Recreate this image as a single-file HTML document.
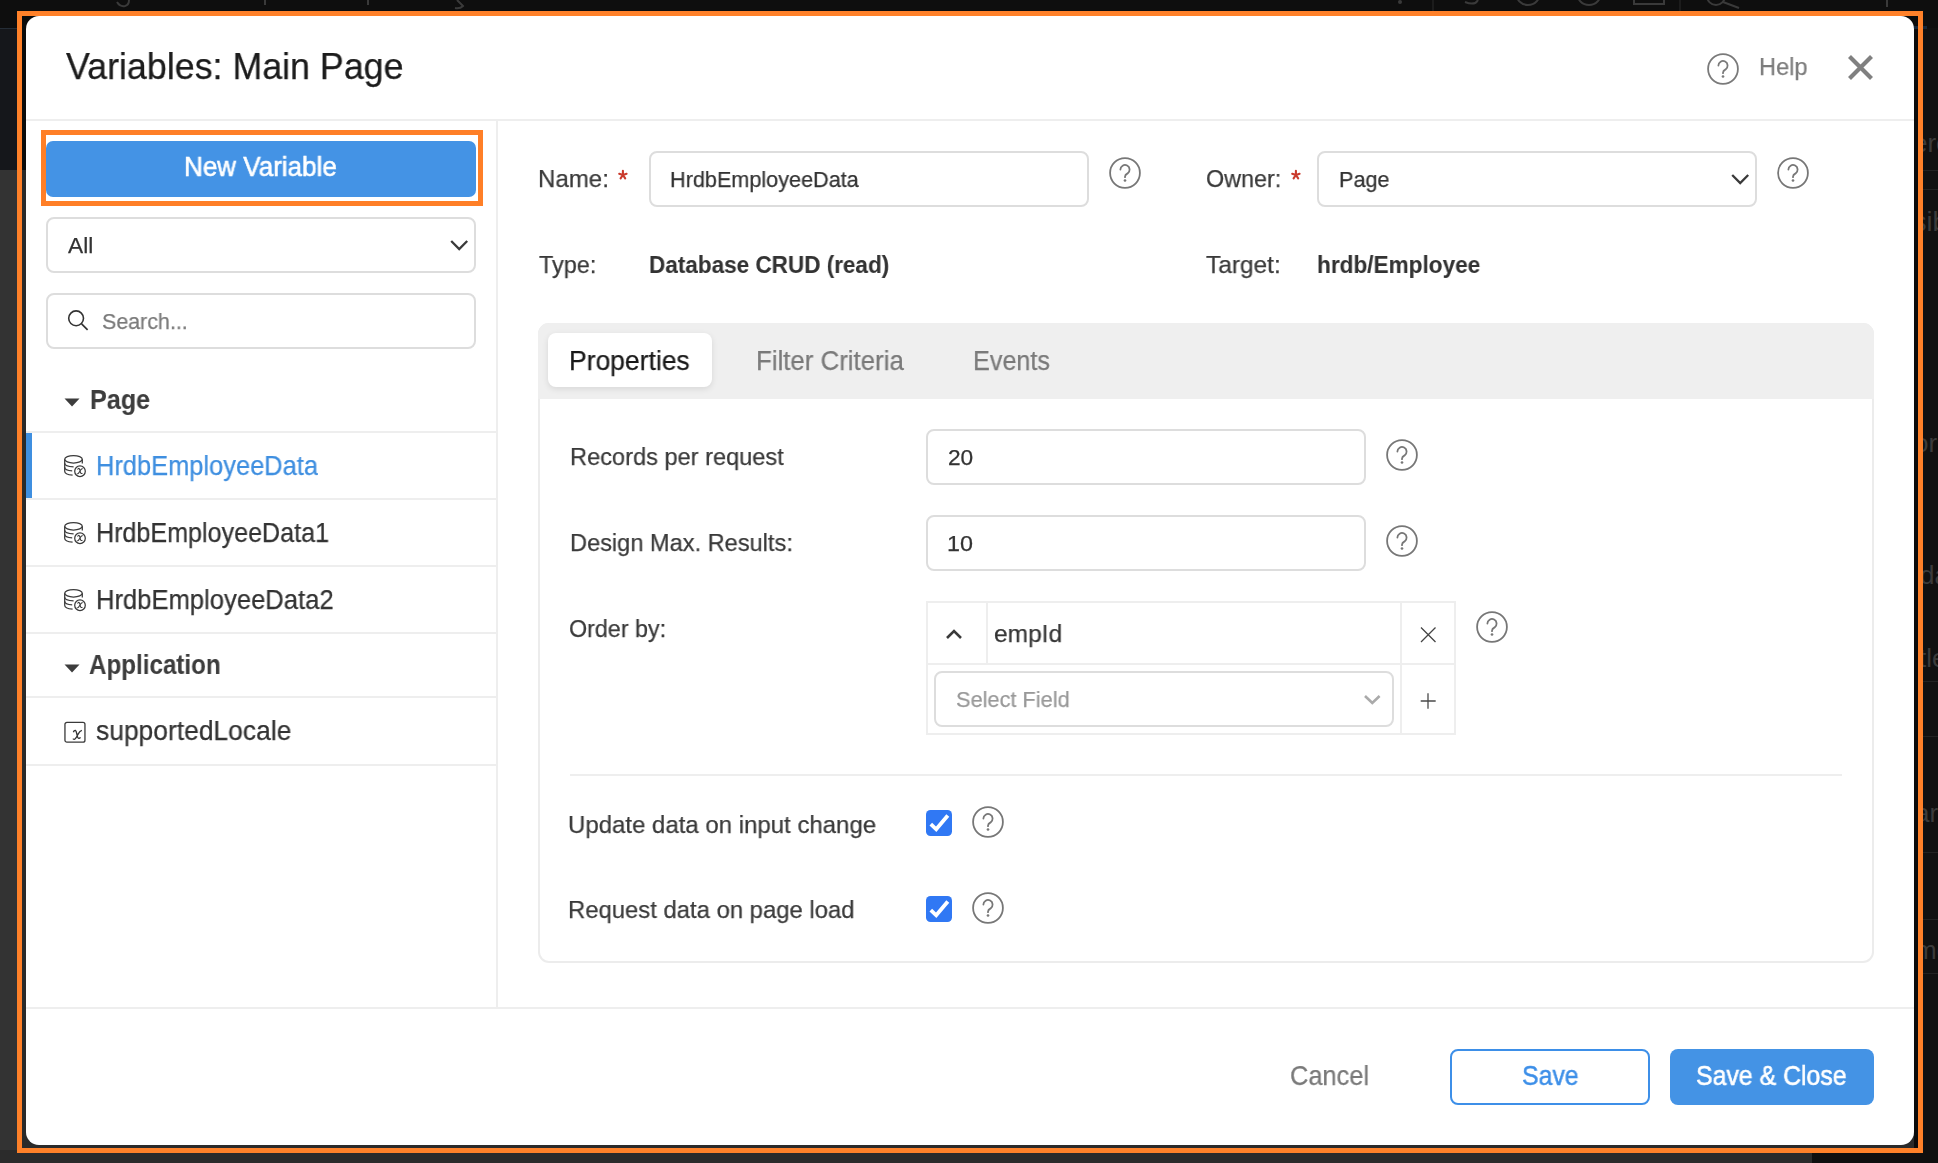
<!DOCTYPE html>
<html><head><meta charset="utf-8"><title>Variables: Main Page</title>
<style>
html,body{margin:0;padding:0;}
body{width:1938px;height:1163px;position:relative;overflow:hidden;font-family:"Liberation Sans", sans-serif;background:#333;}
.t{position:absolute;white-space:nowrap;line-height:1;font-family:"Liberation Sans", sans-serif;will-change:transform;}
svg{overflow:visible;}
</style></head><body>
<div style="position:absolute;left:0px;top:0px;width:1938px;height:1163px;background:#333;"></div>
<div style="position:absolute;left:0px;top:0px;width:1938px;height:170px;background:#131417;"></div>
<div style="position:absolute;left:1918px;top:0px;width:20px;height:1163px;background:#111;"></div>
<div style="position:absolute;left:0px;top:1150px;width:1938px;height:13px;background:#2b2b2b;"></div>
<div style="position:absolute;left:1812px;top:1150px;width:126px;height:13px;background:#0f0f0f;"></div>
<div style="position:absolute;left:0px;top:0px;width:1938px;height:28px;background:#0e0e0e;"></div>
<div style="position:absolute;left:0px;top:28px;width:17px;height:1px;background:#252d36;"></div>
<div style="position:absolute;left:0px;top:29px;width:17px;height:141px;background:#15171b;"></div>
<svg style="position:absolute;left:0;top:0" width="1938" height="11" viewBox="0 0 1938 11"><g fill="none" stroke="#3a3a3a" stroke-width="2"><path d="M117 2 Q120 7 125 6 Q129 5 129 0"/><path d="M265 0 V5"/><path d="M368 0 V5"/><path d="M457 0 L463 6 Q460 9 455 8"/><circle cx="1528" cy="-7" r="12"/><circle cx="1589" cy="-7" r="12"/><path d="M1634 -2 V4 H1664 V-2"/><circle cx="1716" cy="-4" r="9"/><path d="M1723 2 L1739 8"/><path d="M1465 2 Q1475 6 1478 0"/></g><path d="M1433 0 V11 M1680 0 V11" stroke="#2a2a2a" stroke-width="1"/><path d="M1887 0 V7" stroke="#3a3a3a" stroke-width="2"/><circle cx="1400" cy="2" r="2" fill="#3a3a3a"/></svg>
<div style="position:absolute;left:1923px;top:0;width:15px;height:1163px;overflow:hidden;"><div style="position:absolute;left:-30px;top:0;width:60px;height:1163px;font-family:'Liberation Sans',sans-serif;font-size:26px;color:#3b3b3b;"><div style="position:absolute;left:20px;top:128px;white-space:nowrap;">erc</div><div style="position:absolute;left:0;top:170px;width:60px;height:1px;background:#222;"></div><div style="position:absolute;left:0;top:189px;width:60px;height:1px;background:#222;"></div><div style="position:absolute;left:20px;top:207px;white-space:nowrap;font-size:27px;">sib</div><div style="position:absolute;left:21px;top:428px;white-space:nowrap;">or</div><div style="position:absolute;left:27px;top:560px;white-space:nowrap;">da</div><div style="position:absolute;left:26px;top:643px;white-space:nowrap;">tle</div><div style="position:absolute;left:0;top:681px;width:60px;height:1px;background:#222;"></div><div style="position:absolute;left:0;top:736px;width:60px;height:1px;background:#222;"></div><div style="position:absolute;left:22px;top:798px;white-space:nowrap;">ar</div><div style="position:absolute;left:0;top:852px;width:60px;height:1px;background:#222;"></div><div style="position:absolute;left:0;top:919px;width:60px;height:1px;background:#222;"></div><div style="position:absolute;left:22px;top:935px;white-space:nowrap;">me</div><div style="position:absolute;left:0;top:973px;width:60px;height:1px;background:#222;"></div></div></div>
<div style="position:absolute;left:17px;top:11px;width:1906px;height:159px;background:#0b0b0b;"></div>
<div style="position:absolute;left:17px;top:170px;width:1906px;height:983px;background:#2a2a2a;"></div>
<div style="position:absolute;left:1914px;top:11px;width:9px;height:1142px;background:#0b0b0b;"></div>
<div style="position:absolute;left:1914px;top:26px;width:13px;height:3px;background:#15263a;"></div>
<div style="position:absolute;left:17px;top:11px;width:1906px;height:1142px;box-sizing:border-box;border:5px solid #ff8129;"></div>
<div style="position:absolute;left:26px;top:16px;width:1888px;height:1129px;background:#fff;border-radius:13px;"></div>
<svg style="position:absolute;left:1703px;top:49px" width="40" height="40" viewBox="0 0 40 40"><circle cx="20" cy="20" r="14.90" fill="none" stroke="#7a7a7a" stroke-width="1.8"/><path d="M15.4 16.6 A4.6 4.6 0 1 1 22.6 20.4 C21.1 21.2 20 22 20 23.7 V24.2" fill="none" stroke="#7a7a7a" stroke-width="1.8" stroke-linecap="round"/><circle cx="20" cy="27.5" r="1.35" fill="#7a7a7a"/></svg>
<svg style="position:absolute;left:1846px;top:53px" width="29" height="29" viewBox="0 0 29 29"><path d="M3.5 3.5 L25.5 25.5 M25.5 3.5 L3.5 25.5" stroke="#808080" stroke-width="4.2" stroke-linecap="butt"/></svg>
<div style="position:absolute;left:26px;top:119px;width:1888px;height:2px;background:#eeeeee;"></div>
<div style="position:absolute;left:496px;top:121px;width:2px;height:886px;background:#eeeeee;"></div>
<div style="position:absolute;left:26px;top:1007px;width:1888px;height:2px;background:#eeeeee;"></div>
<div style="position:absolute;left:41px;top:130px;width:442px;height:76px;box-sizing:border-box;border:5px solid #ff7f27;"></div>
<div style="position:absolute;left:46px;top:141px;width:430px;height:56px;background:#4493e5;border-radius:7px;"></div>
<div style="position:absolute;left:46px;top:217px;width:430px;height:56px;box-sizing:border-box;border:2px solid #dddddd;border-radius:8px;"></div>
<svg style="position:absolute;left:448px;top:238px" width="22" height="14" viewBox="0 0 22 14"><path d="M3.2 3 L11.2 11 L19.2 3" fill="none" stroke="#3a3a3a" stroke-width="2.3"/></svg>
<div style="position:absolute;left:46px;top:293px;width:430px;height:56px;box-sizing:border-box;border:2px solid #dddddd;border-radius:8px;"></div>
<svg style="position:absolute;left:64px;top:306px" width="28" height="28" viewBox="0 0 28 28"><circle cx="12.1" cy="12.3" r="7.4" fill="none" stroke="#333" stroke-width="1.6"/><path d="M17.6 17.8 L23.6 23.8" stroke="#333" stroke-width="1.7"/></svg>
<svg style="position:absolute;left:64px;top:398px" width="16" height="9" viewBox="0 0 16 9"><path d="M0.5 0.5 L15.5 0.5 L8 8.5 Z" fill="#3d3d3d"/></svg>
<div style="position:absolute;left:26px;top:431px;width:470px;height:2px;background:#eeeeee;"></div>
<div style="position:absolute;left:26px;top:498px;width:470px;height:2px;background:#eeeeee;"></div>
<div style="position:absolute;left:26px;top:565px;width:470px;height:2px;background:#eeeeee;"></div>
<div style="position:absolute;left:26px;top:632px;width:470px;height:2px;background:#eeeeee;"></div>
<div style="position:absolute;left:26px;top:696px;width:470px;height:2px;background:#eeeeee;"></div>
<div style="position:absolute;left:26px;top:764px;width:470px;height:2px;background:#eeeeee;"></div>
<div style="position:absolute;left:26px;top:433px;width:6px;height:65px;background:#3f8fe0;"></div>
<svg style="position:absolute;left:63px;top:454px" width="24" height="24" viewBox="0 0 24 24"><g fill="none" stroke="#3a3a3a" stroke-width="1.25"><ellipse cx="10.5" cy="5.3" rx="8.8" ry="3.7"/><path d="M1.7 5.3 V17.2 C1.7 19.4 5 20.8 9.6 21.2"/><path d="M1.7 9.2 C1.7 11.3 5.4 12.6 10.6 12.8"/><path d="M1.7 13.2 C1.7 15.3 5 16.6 9.2 16.8"/><path d="M19.3 5.3 V9.6"/><circle cx="17" cy="17.2" r="5.3"/></g><path d="M14.6 15.6 C14.9 14.6 15.5 14.2 16.1 14.5 C16.9 15 17.1 17.5 17.6 18.9 C17.9 19.8 18.8 19.8 19.3 18.9 M19.7 14.5 C18.7 14.6 17.6 15.8 16.8 17.3 C16.2 18.5 15.6 19.6 14.8 19.8 C14.4 19.9 14.2 19.6 14.3 19.3" fill="none" stroke="#3a3a3a" stroke-width="1.05"/></svg>
<svg style="position:absolute;left:63px;top:521px" width="24" height="24" viewBox="0 0 24 24"><g fill="none" stroke="#3a3a3a" stroke-width="1.25"><ellipse cx="10.5" cy="5.3" rx="8.8" ry="3.7"/><path d="M1.7 5.3 V17.2 C1.7 19.4 5 20.8 9.6 21.2"/><path d="M1.7 9.2 C1.7 11.3 5.4 12.6 10.6 12.8"/><path d="M1.7 13.2 C1.7 15.3 5 16.6 9.2 16.8"/><path d="M19.3 5.3 V9.6"/><circle cx="17" cy="17.2" r="5.3"/></g><path d="M14.6 15.6 C14.9 14.6 15.5 14.2 16.1 14.5 C16.9 15 17.1 17.5 17.6 18.9 C17.9 19.8 18.8 19.8 19.3 18.9 M19.7 14.5 C18.7 14.6 17.6 15.8 16.8 17.3 C16.2 18.5 15.6 19.6 14.8 19.8 C14.4 19.9 14.2 19.6 14.3 19.3" fill="none" stroke="#3a3a3a" stroke-width="1.05"/></svg>
<svg style="position:absolute;left:63px;top:588px" width="24" height="24" viewBox="0 0 24 24"><g fill="none" stroke="#3a3a3a" stroke-width="1.25"><ellipse cx="10.5" cy="5.3" rx="8.8" ry="3.7"/><path d="M1.7 5.3 V17.2 C1.7 19.4 5 20.8 9.6 21.2"/><path d="M1.7 9.2 C1.7 11.3 5.4 12.6 10.6 12.8"/><path d="M1.7 13.2 C1.7 15.3 5 16.6 9.2 16.8"/><path d="M19.3 5.3 V9.6"/><circle cx="17" cy="17.2" r="5.3"/></g><path d="M14.6 15.6 C14.9 14.6 15.5 14.2 16.1 14.5 C16.9 15 17.1 17.5 17.6 18.9 C17.9 19.8 18.8 19.8 19.3 18.9 M19.7 14.5 C18.7 14.6 17.6 15.8 16.8 17.3 C16.2 18.5 15.6 19.6 14.8 19.8 C14.4 19.9 14.2 19.6 14.3 19.3" fill="none" stroke="#3a3a3a" stroke-width="1.05"/></svg>
<svg style="position:absolute;left:64px;top:664px" width="16" height="9" viewBox="0 0 16 9"><path d="M0.5 0.5 L15.5 0.5 L8 8.5 Z" fill="#3d3d3d"/></svg>
<svg style="position:absolute;left:63px;top:721px" width="24" height="24" viewBox="0 0 24 24"><rect x="1.95" y="1.35" width="20" height="19.8" rx="2" fill="none" stroke="#3a3a3a" stroke-width="1.3"/><path d="M10.4 11.3 C10.8 9.9 11.6 9.1 12.4 9.4 C13.5 9.9 13.8 13.5 14.5 15.9 C15 17.6 16.3 18 17.5 16.4 M18.9 9.4 C17.6 9.6 16.1 11.2 15.1 13.1 C14.2 14.9 13.1 17.6 11.8 18.2 C11 18.5 10.3 18.2 10.1 17.6" fill="none" stroke="#333" stroke-width="1.35"/></svg>
<svg style="position:absolute;left:612px;top:164px" width="22" height="22" viewBox="0 0 22 22"><path d="M10.9 11 L10.9 6.7 M10.9 11 L7.2 9.8 M10.9 11 L14.6 9.8 M10.9 11 L8.6 14.4 M10.9 11 L13.2 14.4" stroke="#ca3a2c" stroke-width="2.1" stroke-linecap="round"/></svg>
<div style="position:absolute;left:649px;top:151px;width:440px;height:56px;box-sizing:border-box;border:2px solid #dddddd;border-radius:8px;"></div>
<svg style="position:absolute;left:1105px;top:153px" width="40" height="40" viewBox="0 0 40 40"><circle cx="20" cy="20" r="14.90" fill="none" stroke="#777" stroke-width="1.8"/><path d="M15.4 16.6 A4.6 4.6 0 1 1 22.6 20.4 C21.1 21.2 20 22 20 23.7 V24.2" fill="none" stroke="#777" stroke-width="1.8" stroke-linecap="round"/><circle cx="20" cy="27.5" r="1.35" fill="#777"/></svg>
<svg style="position:absolute;left:1284.7px;top:164px" width="22" height="22" viewBox="0 0 22 22"><path d="M10.9 11 L10.9 6.7 M10.9 11 L7.2 9.8 M10.9 11 L14.6 9.8 M10.9 11 L8.6 14.4 M10.9 11 L13.2 14.4" stroke="#ca3a2c" stroke-width="2.1" stroke-linecap="round"/></svg>
<div style="position:absolute;left:1317px;top:151px;width:440px;height:56px;box-sizing:border-box;border:2px solid #dddddd;border-radius:8px;"></div>
<svg style="position:absolute;left:1729px;top:172px" width="22" height="14" viewBox="0 0 22 14"><path d="M3.2 3 L11.2 11 L19.2 3" fill="none" stroke="#3a3a3a" stroke-width="2.3"/></svg>
<svg style="position:absolute;left:1773px;top:153px" width="40" height="40" viewBox="0 0 40 40"><circle cx="20" cy="20" r="14.90" fill="none" stroke="#777" stroke-width="1.8"/><path d="M15.4 16.6 A4.6 4.6 0 1 1 22.6 20.4 C21.1 21.2 20 22 20 23.7 V24.2" fill="none" stroke="#777" stroke-width="1.8" stroke-linecap="round"/><circle cx="20" cy="27.5" r="1.35" fill="#777"/></svg>
<div style="position:absolute;left:538px;top:323px;width:1336px;height:640px;box-sizing:border-box;border:2px solid #ececec;border-radius:11px;background:#fff;overflow:hidden;"></div>
<div style="position:absolute;left:538px;top:323px;width:1336px;height:76px;background:#efefef;border-radius:11px 11px 0 0;"></div>
<div style="position:absolute;left:548px;top:333px;width:164px;height:54px;background:#fff;border-radius:8px;box-shadow:0 2px 6px rgba(0,0,0,0.10);"></div>
<div style="position:absolute;left:926px;top:429px;width:440px;height:56px;box-sizing:border-box;border:2px solid #dddddd;border-radius:8px;"></div>
<svg style="position:absolute;left:1382px;top:435px" width="40" height="40" viewBox="0 0 40 40"><circle cx="20" cy="20" r="14.90" fill="none" stroke="#777" stroke-width="1.8"/><path d="M15.4 16.6 A4.6 4.6 0 1 1 22.6 20.4 C21.1 21.2 20 22 20 23.7 V24.2" fill="none" stroke="#777" stroke-width="1.8" stroke-linecap="round"/><circle cx="20" cy="27.5" r="1.35" fill="#777"/></svg>
<div style="position:absolute;left:926px;top:515px;width:440px;height:56px;box-sizing:border-box;border:2px solid #dddddd;border-radius:8px;"></div>
<svg style="position:absolute;left:1382px;top:521px" width="40" height="40" viewBox="0 0 40 40"><circle cx="20" cy="20" r="14.90" fill="none" stroke="#777" stroke-width="1.8"/><path d="M15.4 16.6 A4.6 4.6 0 1 1 22.6 20.4 C21.1 21.2 20 22 20 23.7 V24.2" fill="none" stroke="#777" stroke-width="1.8" stroke-linecap="round"/><circle cx="20" cy="27.5" r="1.35" fill="#777"/></svg>
<div style="position:absolute;left:926px;top:601px;width:530px;height:134px;box-sizing:border-box;border:2px solid #eeeeee;"></div>
<div style="position:absolute;left:986px;top:601px;width:2px;height:64px;background:#eeeeee;"></div>
<div style="position:absolute;left:1400px;top:601px;width:2px;height:134px;background:#eeeeee;"></div>
<div style="position:absolute;left:926px;top:663px;width:530px;height:2px;background:#eeeeee;"></div>
<svg style="position:absolute;left:944px;top:627px" width="20" height="14" viewBox="0 0 20 14"><path d="M3 11 L10 4 L17 11" fill="none" stroke="#3a3a3a" stroke-width="2.6"/></svg>
<svg style="position:absolute;left:1418px;top:625px" width="20" height="20" viewBox="0 0 20 20"><path d="M3 2.5 L17.5 17 M17.5 2.5 L3 17" stroke="#444" stroke-width="1.3"/></svg>
<div style="position:absolute;left:934px;top:671px;width:460px;height:56px;box-sizing:border-box;border:2px solid #dddddd;border-radius:8px;"></div>
<svg style="position:absolute;left:1362px;top:693px" width="20" height="13" viewBox="0 0 20 13"><path d="M3 3 L10.3 10 L17.6 3" fill="none" stroke="#aaaaaa" stroke-width="2.6"/></svg>
<svg style="position:absolute;left:1418px;top:691px" width="20" height="20" viewBox="0 0 20 20"><path d="M10 2.3 V17.8 M2.7 10 H17.7" stroke="#4a4a4a" stroke-width="1.3"/></svg>
<svg style="position:absolute;left:1472px;top:607px" width="40" height="40" viewBox="0 0 40 40"><circle cx="20" cy="20" r="14.90" fill="none" stroke="#777" stroke-width="1.8"/><path d="M15.4 16.6 A4.6 4.6 0 1 1 22.6 20.4 C21.1 21.2 20 22 20 23.7 V24.2" fill="none" stroke="#777" stroke-width="1.8" stroke-linecap="round"/><circle cx="20" cy="27.5" r="1.35" fill="#777"/></svg>
<div style="position:absolute;left:570px;top:774px;width:1272px;height:2px;background:#eeeeee;"></div>
<svg style="position:absolute;left:926px;top:810px" width="26" height="26" viewBox="0 0 26 26"><rect x="0" y="0" width="26" height="26" rx="4.5" fill="#3078f4"/><path d="M4.8 14.2 L10.2 19.3 L21.8 5.6" fill="none" stroke="#fff" stroke-width="3.8"/></svg>
<svg style="position:absolute;left:968px;top:802px" width="40" height="40" viewBox="0 0 40 40"><circle cx="20" cy="20" r="14.90" fill="none" stroke="#777" stroke-width="1.8"/><path d="M15.4 16.6 A4.6 4.6 0 1 1 22.6 20.4 C21.1 21.2 20 22 20 23.7 V24.2" fill="none" stroke="#777" stroke-width="1.8" stroke-linecap="round"/><circle cx="20" cy="27.5" r="1.35" fill="#777"/></svg>
<svg style="position:absolute;left:926px;top:896px" width="26" height="26" viewBox="0 0 26 26"><rect x="0" y="0" width="26" height="26" rx="4.5" fill="#3078f4"/><path d="M4.8 14.2 L10.2 19.3 L21.8 5.6" fill="none" stroke="#fff" stroke-width="3.8"/></svg>
<svg style="position:absolute;left:968px;top:888px" width="40" height="40" viewBox="0 0 40 40"><circle cx="20" cy="20" r="14.90" fill="none" stroke="#777" stroke-width="1.8"/><path d="M15.4 16.6 A4.6 4.6 0 1 1 22.6 20.4 C21.1 21.2 20 22 20 23.7 V24.2" fill="none" stroke="#777" stroke-width="1.8" stroke-linecap="round"/><circle cx="20" cy="27.5" r="1.35" fill="#777"/></svg>
<div style="position:absolute;left:1450px;top:1049px;width:200px;height:56px;box-sizing:border-box;border:2px solid #3d8fe8;border-radius:8px;"></div>
<div style="position:absolute;left:1670px;top:1049px;width:204px;height:56px;background:#4493e5;border-radius:8px;"></div>
<div class="t" style="left:66px;top:48.44px;font-size:37.2px;color:#1c1c1c;font-weight:normal;transform:scaleX(0.9624);transform-origin:0 0;-webkit-text-stroke:0.25px #1c1c1c;">Variables: Main Page</div>
<div class="t" style="left:1759.1px;top:54.80px;font-size:24.8px;color:#7c7c7c;font-weight:normal;transform:scaleX(0.9502);transform-origin:0 0;-webkit-text-stroke:0.25px #7c7c7c;">Help</div>
<div class="t" style="left:184.4px;top:153.62px;font-size:26.9px;color:#ffffff;font-weight:normal;transform:scaleX(0.9676);transform-origin:0 0;-webkit-text-stroke:0.6px #ffffff;">New Variable</div>
<div class="t" style="left:68px;top:233.78px;font-size:22.7px;color:#333333;font-weight:normal;transform:scaleX(1.0000);transform-origin:0 0;-webkit-text-stroke:0.25px #333333;">All</div>
<div class="t" style="left:102.1px;top:309.68px;font-size:22.7px;color:#7a7a7a;font-weight:normal;transform:scaleX(0.9439);transform-origin:0 0;-webkit-text-stroke:0.25px #7a7a7a;">Search...</div>
<div class="t" style="left:90.0px;top:386.82px;font-size:26.9px;color:#3d3d3d;font-weight:bold;transform:scaleX(0.9335);transform-origin:0 0;-webkit-text-stroke:0.1px #3d3d3d;">Page</div>
<div class="t" style="left:96px;top:452.62px;font-size:26.9px;color:#3f8fe0;font-weight:normal;transform:scaleX(0.9461);transform-origin:0 0;-webkit-text-stroke:0.25px #3f8fe0;">HrdbEmployeeData</div>
<div class="t" style="left:96px;top:519.52px;font-size:26.9px;color:#333333;font-weight:normal;transform:scaleX(0.9336);transform-origin:0 0;-webkit-text-stroke:0.25px #333333;">HrdbEmployeeData1</div>
<div class="t" style="left:96px;top:587.02px;font-size:26.9px;color:#333333;font-weight:normal;transform:scaleX(0.9519);transform-origin:0 0;-webkit-text-stroke:0.25px #333333;">HrdbEmployeeData2</div>
<div class="t" style="left:89px;top:652.18px;font-size:26.9px;color:#3d3d3d;font-weight:bold;transform:scaleX(0.8997);transform-origin:0 0;-webkit-text-stroke:0.1px #3d3d3d;">Application</div>
<div class="t" style="left:95.8px;top:718.42px;font-size:26.9px;color:#333333;font-weight:normal;transform:scaleX(0.9822);transform-origin:0 0;-webkit-text-stroke:0.25px #333333;">supportedLocale</div>
<div class="t" style="left:538.0px;top:167.39px;font-size:24.8px;color:#3a3a3a;font-weight:normal;transform:scaleX(0.9703);transform-origin:0 0;-webkit-text-stroke:0.25px #3a3a3a;">Name:</div>
<div class="t" style="left:670.2px;top:167.68px;font-size:22.7px;color:#333333;font-weight:normal;transform:scaleX(0.9536);transform-origin:0 0;-webkit-text-stroke:0.25px #333333;">HrdbEmployeeData</div>
<div class="t" style="left:1205.6px;top:167.00px;font-size:24.8px;color:#3a3a3a;font-weight:normal;transform:scaleX(0.9416);transform-origin:0 0;-webkit-text-stroke:0.25px #3a3a3a;">Owner:</div>
<div class="t" style="left:1339px;top:167.68px;font-size:22.7px;color:#333333;font-weight:normal;transform:scaleX(0.9540);transform-origin:0 0;-webkit-text-stroke:0.25px #333333;">Page</div>
<div class="t" style="left:538.6px;top:252.60px;font-size:24.8px;color:#3a3a3a;font-weight:normal;transform:scaleX(0.9449);transform-origin:0 0;-webkit-text-stroke:0.25px #3a3a3a;">Type:</div>
<div class="t" style="left:649px;top:252.60px;font-size:24.8px;color:#333333;font-weight:bold;transform:scaleX(0.9080);transform-origin:0 0;-webkit-text-stroke:0.1px #333333;">Database CRUD (read)</div>
<div class="t" style="left:1206.4px;top:252.60px;font-size:24.8px;color:#3a3a3a;font-weight:normal;transform:scaleX(0.9851);transform-origin:0 0;-webkit-text-stroke:0.25px #3a3a3a;">Target:</div>
<div class="t" style="left:1316.6px;top:252.60px;font-size:24.8px;color:#333333;font-weight:bold;transform:scaleX(0.9118);transform-origin:0 0;-webkit-text-stroke:0.1px #333333;">hrdb/Employee</div>
<div class="t" style="left:568.9px;top:348.22px;font-size:26.9px;color:#1a1a1a;font-weight:normal;transform:scaleX(0.9850);transform-origin:0 0;-webkit-text-stroke:0.25px #1a1a1a;">Properties</div>
<div class="t" style="left:756.2px;top:348.22px;font-size:26.9px;color:#7a7a7a;font-weight:normal;transform:scaleX(0.9603);transform-origin:0 0;-webkit-text-stroke:0.25px #7a7a7a;">Filter Criteria</div>
<div class="t" style="left:973.2px;top:348.22px;font-size:26.9px;color:#7a7a7a;font-weight:normal;transform:scaleX(0.9363);transform-origin:0 0;-webkit-text-stroke:0.25px #7a7a7a;">Events</div>
<div class="t" style="left:570.1px;top:444.80px;font-size:24.8px;color:#3a3a3a;font-weight:normal;transform:scaleX(0.9517);transform-origin:0 0;-webkit-text-stroke:0.25px #3a3a3a;">Records per request</div>
<div class="t" style="left:947.8px;top:445.78px;font-size:22.7px;color:#333333;font-weight:normal;transform:scaleX(1.0000);transform-origin:0 0;-webkit-text-stroke:0.25px #333333;">20</div>
<div class="t" style="left:570.1px;top:531.00px;font-size:24.8px;color:#3a3a3a;font-weight:normal;transform:scaleX(0.9512);transform-origin:0 0;-webkit-text-stroke:0.25px #3a3a3a;">Design Max. Results:</div>
<div class="t" style="left:946.7px;top:531.78px;font-size:22.7px;color:#333333;font-weight:normal;transform:scaleX(1.0282);transform-origin:0 0;-webkit-text-stroke:0.25px #333333;">10</div>
<div class="t" style="left:569.4px;top:617.20px;font-size:24.8px;color:#3a3a3a;font-weight:normal;transform:scaleX(0.9396);transform-origin:0 0;-webkit-text-stroke:0.25px #3a3a3a;">Order by:</div>
<div class="t" style="left:993.8px;top:622.10px;font-size:24.8px;color:#333333;font-weight:normal;transform:scaleX(0.9881);transform-origin:0 0;-webkit-text-stroke:0.25px #333333;">empId</div>
<div class="t" style="left:955.6px;top:687.78px;font-size:22.7px;color:#999999;font-weight:normal;transform:scaleX(0.9586);transform-origin:0 0;-webkit-text-stroke:0.25px #999999;">Select Field</div>
<div class="t" style="left:568.4px;top:812.50px;font-size:24.8px;color:#3a3a3a;font-weight:normal;transform:scaleX(0.9674);transform-origin:0 0;-webkit-text-stroke:0.25px #3a3a3a;">Update data on input change</div>
<div class="t" style="left:568px;top:897.99px;font-size:24.8px;color:#3a3a3a;font-weight:normal;transform:scaleX(0.9619);transform-origin:0 0;-webkit-text-stroke:0.25px #3a3a3a;">Request data on page load</div>
<div class="t" style="left:1289.8px;top:1063.02px;font-size:26.9px;color:#7a7a7a;font-weight:normal;transform:scaleX(0.9452);transform-origin:0 0;-webkit-text-stroke:0.25px #7a7a7a;">Cancel</div>
<div class="t" style="left:1522.1px;top:1063.22px;font-size:26.9px;color:#3d8fe8;font-weight:normal;transform:scaleX(0.9237);transform-origin:0 0;-webkit-text-stroke:0.5px #3d8fe8;">Save</div>
<div class="t" style="left:1696.0px;top:1063.22px;font-size:26.9px;color:#ffffff;font-weight:normal;transform:scaleX(0.9242);transform-origin:0 0;-webkit-text-stroke:0.6px #ffffff;">Save &amp; Close</div>
</body></html>
